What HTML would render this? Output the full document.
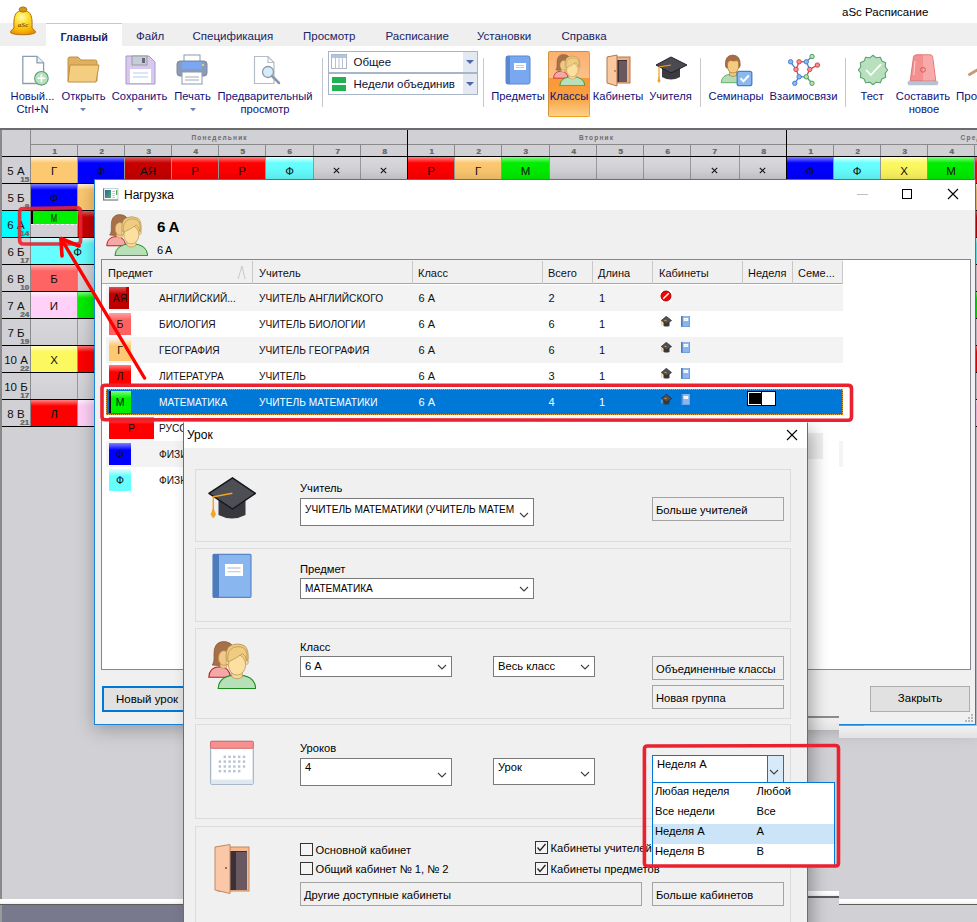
<!DOCTYPE html><html><head><meta charset="utf-8"><style>
html,body{margin:0;padding:0;}
body{width:977px;height:922px;overflow:hidden;position:relative;background:#fff;font-family:"Liberation Sans", sans-serif;}
div{box-sizing:border-box;}
</style></head><body>
<div style="position:absolute;left:842px;top:7px;font-size:11.5px;line-height:11.5px;height:11.5px;color:#000;font-weight:400;white-space:nowrap;">aSc Расписание</div>
<div style="position:absolute;left:0px;top:23px;width:977px;height:23px;background:#efefef;"></div>
<div style="position:absolute;left:46px;top:23px;width:76px;height:23px;background:#fff;border-top:1px solid #c8c8c8;"></div>
<svg style="position:absolute;left:0px;top:0px" width="40" height="40" viewBox="0 0 40 40">
<defs><radialGradient id="bellg" cx="0.45" cy="0.3" r="0.75"><stop offset="0" stop-color="#fffbb0"/><stop offset="0.35" stop-color="#ffe030"/><stop offset="0.75" stop-color="#f8b400"/><stop offset="1" stop-color="#e88a00"/></radialGradient></defs>
<path d="M14 28 C13.5 18 14 11 23 10 C32 11 32.5 18 32 28 C34 30 36 31 35.5 32.5 C33 35.5 13 35.5 10.5 32.5 C10 31 12 30 14 28 Z" fill="url(#bellg)" stroke="#a86a10" stroke-width="0.9"/>
<ellipse cx="23" cy="9.5" rx="3.8" ry="2.6" fill="#d89418" stroke="#98600c" stroke-width="0.8"/>
<text x="23" y="27" font-size="7" text-anchor="middle" fill="#8a4a10" font-family="Liberation Serif" font-style="italic" font-weight="bold">aSc</text>
</svg>
<div style="position:absolute;left:60.5px;top:32px;font-size:10.8px;line-height:10.8px;height:10.8px;color:#1a2464;font-weight:700;white-space:nowrap;">Главный</div>
<div style="position:absolute;left:136px;top:31px;font-size:11.5px;line-height:11.5px;height:11.5px;color:#1a2464;font-weight:400;white-space:nowrap;">Файл</div>
<div style="position:absolute;left:192.5px;top:31px;font-size:11.5px;line-height:11.5px;height:11.5px;color:#1a2464;font-weight:400;white-space:nowrap;">Спецификация</div>
<div style="position:absolute;left:303px;top:31px;font-size:11.5px;line-height:11.5px;height:11.5px;color:#1a2464;font-weight:400;white-space:nowrap;">Просмотр</div>
<div style="position:absolute;left:385.5px;top:31px;font-size:11.5px;line-height:11.5px;height:11.5px;color:#1a2464;font-weight:400;white-space:nowrap;">Расписание</div>
<div style="position:absolute;left:477px;top:31px;font-size:11.5px;line-height:11.5px;height:11.5px;color:#1a2464;font-weight:400;white-space:nowrap;">Установки</div>
<div style="position:absolute;left:561.5px;top:31px;font-size:11.5px;line-height:11.5px;height:11.5px;color:#1a2464;font-weight:400;white-space:nowrap;">Справка</div>
<div style="position:absolute;left:548px;top:51px;width:42px;height:66px;border:1px solid #f0a848;border-radius:2px;background:linear-gradient(to bottom,#fbb070 0%,#fcc088 40%,#f99838 41%,#f9a040 70%,#fcd088 100%);border-color:#c89048 #f0a020 #f0a020 #d09040;"></div>
<div style="position:absolute;left:-27.5px;width:120px;text-align:center;top:90px;font-size:11.2px;line-height:12px;color:#10107a;white-space:nowrap;">Новый...</div>
<div style="position:absolute;left:-27.5px;width:120px;text-align:center;top:102.5px;font-size:11.2px;line-height:12px;color:#10107a;white-space:nowrap;">Ctrl+N</div>
<div style="position:absolute;left:23.5px;width:120px;text-align:center;top:90px;font-size:11.2px;line-height:12px;color:#10107a;white-space:nowrap;">Открыть</div>
<div style="position:absolute;left:79.5px;width:120px;text-align:center;top:90px;font-size:11.2px;line-height:12px;color:#10107a;white-space:nowrap;">Сохранить</div>
<div style="position:absolute;left:132.5px;width:120px;text-align:center;top:90px;font-size:11.2px;line-height:12px;color:#10107a;white-space:nowrap;">Печать</div>
<div style="position:absolute;left:205px;width:120px;text-align:center;top:90px;font-size:11.2px;line-height:12px;color:#10107a;white-space:nowrap;">Предварительный</div>
<div style="position:absolute;left:205px;width:120px;text-align:center;top:102.5px;font-size:11.2px;line-height:12px;color:#10107a;white-space:nowrap;">просмотр</div>
<div style="position:absolute;left:458px;width:120px;text-align:center;top:90px;font-size:11.2px;line-height:12px;color:#10107a;white-space:nowrap;">Предметы</div>
<div style="position:absolute;left:509px;width:120px;text-align:center;top:90px;font-size:11.2px;line-height:12px;color:#10107a;white-space:nowrap;">Классы</div>
<div style="position:absolute;left:558px;width:120px;text-align:center;top:90px;font-size:11.2px;line-height:12px;color:#10107a;white-space:nowrap;">Кабинеты</div>
<div style="position:absolute;left:610.5px;width:120px;text-align:center;top:90px;font-size:11.2px;line-height:12px;color:#10107a;white-space:nowrap;">Учителя</div>
<div style="position:absolute;left:676px;width:120px;text-align:center;top:90px;font-size:11.2px;line-height:12px;color:#10107a;white-space:nowrap;">Семинары</div>
<div style="position:absolute;left:743.5px;width:120px;text-align:center;top:90px;font-size:11.2px;line-height:12px;color:#10107a;white-space:nowrap;">Взаимосвязи</div>
<div style="position:absolute;left:812px;width:120px;text-align:center;top:90px;font-size:11.2px;line-height:12px;color:#10107a;white-space:nowrap;">Тест</div>
<div style="position:absolute;left:863px;width:120px;text-align:center;top:90px;font-size:11.2px;line-height:12px;color:#10107a;white-space:nowrap;">Составить</div>
<div style="position:absolute;left:864px;width:120px;text-align:center;top:103px;font-size:11.2px;line-height:12px;color:#10107a;white-space:nowrap;">новое</div>
<div style="position:absolute;left:956px;top:90px;font-size:11.5px;line-height:12px;color:#10107a;white-space:nowrap;">Про</div>
<svg style="position:absolute;left:79.5px;top:107.5px" width="6" height="4"><path d="M0 0 L6 0 L3 3.2Z" fill="#6a7eb0"/></svg>
<svg style="position:absolute;left:136.5px;top:107.5px" width="6" height="4"><path d="M0 0 L6 0 L3 3.2Z" fill="#6a7eb0"/></svg>
<svg style="position:absolute;left:189.5px;top:107.5px" width="6" height="4"><path d="M0 0 L6 0 L3 3.2Z" fill="#6a7eb0"/></svg>
<div style="position:absolute;left:321.5px;top:58px;width:1px;height:49px;background:#c8c8c8;"></div>
<div style="position:absolute;left:482.5px;top:58px;width:1px;height:49px;background:#c8c8c8;"></div>
<div style="position:absolute;left:699.5px;top:58px;width:1px;height:49px;background:#c8c8c8;"></div>
<div style="position:absolute;left:845px;top:58px;width:1px;height:49px;background:#c8c8c8;"></div>
<div style="position:absolute;left:328px;top:51px;width:150px;height:22px;border:1px solid #a8b4c8;background:#fff;"></div>
<div style="position:absolute;left:463px;top:52px;width:14px;height:20px;background:#e4e8f0;"></div>
<svg style="position:absolute;left:466px;top:60px" width="8" height="4"><path d="M0 0 L8 0 L4 4Z" fill="#4a6aa8"/></svg>
<div style="position:absolute;left:353.5px;top:57px;font-size:11.5px;line-height:11.5px;height:11.5px;color:#101030;font-weight:400;white-space:nowrap;">Общее</div>
<div style="position:absolute;left:328px;top:73px;width:150px;height:22px;border:1px solid #a8b4c8;background:#fff;"></div>
<div style="position:absolute;left:463px;top:74px;width:14px;height:20px;background:#e4e8f0;"></div>
<svg style="position:absolute;left:466px;top:82px" width="8" height="4"><path d="M0 0 L8 0 L4 4Z" fill="#4a6aa8"/></svg>
<div style="position:absolute;left:353.5px;top:79px;font-size:11.5px;line-height:11.5px;height:11.5px;color:#101030;font-weight:400;white-space:nowrap;">Недели объединив</div>
<svg style="position:absolute;left:331px;top:54px" width="16" height="16" viewBox="0 0 16 16">
<rect x="0.5" y="0.5" width="15" height="14" fill="#fff" stroke="#b0b8c8"/><rect x="1" y="1" width="14" height="3" fill="#a8c8f0"/>
<path d="M4.5 1 V15 M8 1 V15 M11.5 1 V15" stroke="#b8c0d0" stroke-width="1"/></svg>
<svg style="position:absolute;left:332px;top:77px" width="15" height="15" viewBox="0 0 15 15">
<rect x="0" y="0" width="14" height="6" fill="#1fb350"/><rect x="0" y="8" width="14" height="6" fill="#1fb350"/></svg>

<svg style="position:absolute;left:21px;top:55px" width="30" height="32" viewBox="0 0 30 32">
<path d="M1.8 1.3 H16 L22.6 7.8 V28.5 H1.8 Z" fill="#fff" stroke="#8c9db0" stroke-width="1.3"/>
<path d="M16 1.3 V7.8 H22.6" fill="#e8eef4" stroke="#8c9db0" stroke-width="1.3"/>
<circle cx="20.4" cy="23.3" r="6.8" fill="#b8e0c0" stroke="#5aa070" stroke-width="1.1"/>
<path d="M20.4 19.4 V27.2 M16.5 23.3 H24.3" stroke="#fff" stroke-width="1.6"/>
</svg>
<svg style="position:absolute;left:67px;top:56px" width="33" height="28" viewBox="0 0 33 28">
<path d="M1 3 Q1 1 3 1 H11 L14 4 H28 Q30 4 30 6 V25 H1 Z" fill="#e0b060" stroke="#c09040" stroke-width="1"/>
<path d="M3 9 H32 L29 26 H1 Z" fill="#f5cd80" stroke="#c09040" stroke-width="1"/>
</svg>
<svg style="position:absolute;left:125px;top:55px" width="31" height="30" viewBox="0 0 31 30">
<path d="M1 1 H24 L30 7 V29 H1 Z" fill="#d8c8f0" stroke="#a898c8" stroke-width="1"/>
<rect x="7" y="1" width="15" height="9" fill="#c8ccd8" stroke="#909090" stroke-width="0.8"/>
<rect x="17" y="3" width="3" height="5" fill="#606878"/>
<rect x="5" y="14" width="21" height="14" fill="#fff"/>
<path d="M8 18 H23 M8 22 H23" stroke="#b0d0f0" stroke-width="1"/>
</svg>
<svg style="position:absolute;left:176px;top:54px" width="32" height="31" viewBox="0 0 32 31">
<rect x="8" y="1" width="16" height="8" fill="#fff" stroke="#8a9aac" stroke-width="1"/>
<rect x="1" y="7" width="30" height="15" rx="3" fill="#8a9ab8" stroke="#7a8aa0" stroke-width="1"/>
<rect x="6" y="8" width="20" height="7" fill="#7aa8f0"/>
<circle cx="27" cy="11" r="1" fill="#f8e070"/>
<rect x="6" y="18" width="20" height="12" fill="#fff" stroke="#8a9aac" stroke-width="1"/>
<path d="M9 23 H23 M9 26 H23" stroke="#a0a8b8" stroke-width="1"/>
</svg>
<svg style="position:absolute;left:253px;top:55px" width="29" height="30" viewBox="0 0 29 30">
<path d="M1.5 1.5 H15 L21 7.5 V28.5 H1.5 Z" fill="#fff" stroke="#b4bcc8" stroke-width="1.2"/>
<path d="M15 1.5 V7.5 H21" fill="none" stroke="#b4bcc8" stroke-width="1.2"/>
<circle cx="15" cy="17" r="5.5" fill="#d4ecfc" stroke="#8a98a8" stroke-width="1.3"/>
<path d="M19 21 L26 28" stroke="#8a98a8" stroke-width="2.5" stroke-linecap="round"/>
</svg>
<svg style="position:absolute;left:505px;top:55px" width="26" height="30" viewBox="0 0 26 30">
<rect x="1" y="1" width="24" height="28" rx="2" fill="#7aa8f0" stroke="#5a88d0" stroke-width="1"/>
<rect x="1" y="1" width="4" height="28" fill="#5a88d0"/>
<rect x="9" y="8" width="12" height="7" fill="#fff"/>
<path d="M11 10.5 H19 M11 12.5 H19" stroke="#a8c0e8" stroke-width="0.8"/>
</svg>
<svg style="position:absolute;left:553px;top:54px" width="32" height="32" viewBox="0 0 48 48">
<path d="M0.8 36.3 Q1.5 26 11.5 25.8 Q21.5 26 22.5 36.3 Z" fill="#f5a8a8" stroke="#c01818" stroke-width="1.1"/>
<path d="M4.2 24 Q6.5 21.5 6 14 Q5.5 1 15.3 0.6 Q21.5 0.6 24.5 4.8 L24 21 Q19 25 10 24.5 Z" fill="#a87048" stroke="#8a5836" stroke-width="0.8"/>
<ellipse cx="15.5" cy="24.5" rx="3.5" ry="3" fill="#f0c888" stroke="#b89058" stroke-width="0.7"/>
<ellipse cx="15.8" cy="17" rx="5.3" ry="7.3" fill="#f0c888" stroke="#b89058" stroke-width="0.8"/>
<path d="M10.2 47.6 Q11 34.2 29 34 Q47 34.2 47.7 47.6 Z" fill="#b8e0b8" stroke="#1a8a1a" stroke-width="1.1"/>
<path d="M23.8 29 V36 Q29 39.5 34.2 36 V29 Z" fill="#fcd898" stroke="#b89858" stroke-width="0.8"/>
<path d="M18.6 22 Q16.5 7 23 4.5 Q29.5 1.5 36.5 4.8 Q41.5 8.5 39.8 22 Z" fill="#f0cc80" stroke="#b08e50" stroke-width="0.8"/>
<ellipse cx="19.3" cy="21.6" rx="1.3" ry="2" fill="#fde0a0" stroke="#b89858" stroke-width="0.6"/>
<ellipse cx="38.8" cy="21.6" rx="1.3" ry="2" fill="#fde0a0" stroke="#b89858" stroke-width="0.6"/>
<ellipse cx="29" cy="23.8" rx="8.6" ry="10.3" fill="#fde0a0" stroke="#b89858" stroke-width="0.8"/>
<path d="M20 21 Q18.5 9 25.5 6.5 Q33 4 37.5 8.5 Q40 13 38.8 19.5 Q37.5 14 34.5 12.5 Q29 17 20 21 Z" fill="#f0cc80" stroke="#b08e50" stroke-width="0.7"/>
</svg>
<svg style="position:absolute;left:606px;top:54px" width="26" height="33" viewBox="0 0 26 33">
<rect x="3" y="3" width="21" height="26" fill="#f0b080" stroke="#b07850" stroke-width="1"/>
<rect x="8" y="6" width="13" height="22" fill="#3a3038"/>
<rect x="13" y="7" width="8" height="21" fill="#6a5860"/>
<path d="M1 3 L11 1 V32 L1 29 Z" fill="#fac8a0" stroke="#b07850" stroke-width="1"/>
<circle cx="9" cy="17" r="0.8" fill="#804020"/>
</svg>
<svg style="position:absolute;left:655px;top:56px" width="33" height="28" viewBox="0 0 33 28">
<path d="M7 11 V21 Q16 26 25 21 V11 Z" fill="#3a3a40"/>
<path d="M16 1 L32 9 L16 17 L1 9 Z" fill="#4a4a50" stroke="#202028" stroke-width="1"/>
<path d="M16 9 L4 11 V22" stroke="#f0a020" stroke-width="1.2" fill="none"/>
<path d="M4 20 L2.5 25 L4 27 L5.5 25 Z" fill="#f0a020"/>
</svg>
<svg style="position:absolute;left:720px;top:54px" width="34" height="33" viewBox="0 0 34 33">
<path d="M1.2 28.7 Q1.8 20.3 11.5 20.2 Q18 20.3 20 22 V28.7 Z" fill="#b4dcb4" stroke="#5aa86a" stroke-width="0.9"/>
<path d="M9.5 17 V21.5 Q13 23.5 16.5 21.5 V17 Z" fill="#f0c880" stroke="#a87838" stroke-width="0.7"/>
<path d="M5.5 12 Q4.5 1.5 12.5 1.1 Q20.5 1 20.2 11.5 L19 14 H6.5 Z" fill="#a86c44" stroke="#8a5434" stroke-width="0.7"/>
<path d="M7.4 11 Q7.4 6.8 10.5 6.5 Q14 7.5 17.5 6.6 Q18.8 8 18.7 11 Q18.7 19 13 19 Q7.4 19 7.4 11 Z" fill="#f4cc80" stroke="#a87838" stroke-width="0.7"/>
<rect x="17.2" y="17.3" width="14.6" height="14.4" rx="2" fill="#8ab8f0" stroke="#4a7ec0" stroke-width="1.3"/>
<path d="M20.5 24.3 L23.5 27.3 L28.8 21.5" stroke="#fff" stroke-width="2" fill="none"/>
</svg>
<svg style="position:absolute;left:782px;top:50px" width="40" height="40" viewBox="0 0 40 40"><line x1="8.6" y1="11.8" x2="14.0" y2="19.4" stroke="#4a80d0" stroke-width="1.3"/><line x1="17.1" y1="11.8" x2="14.0" y2="19.4" stroke="#d04848" stroke-width="1.3"/><line x1="17.1" y1="11.8" x2="24.3" y2="11.8" stroke="#d04848" stroke-width="1.3"/><line x1="24.3" y1="11.8" x2="30.0" y2="6.5" stroke="#4a80d0" stroke-width="1.3"/><line x1="24.3" y1="11.8" x2="27.7" y2="19.4" stroke="#4a80d0" stroke-width="1.3"/><line x1="27.7" y1="19.4" x2="35.4" y2="15.1" stroke="#d04848" stroke-width="1.3"/><line x1="27.7" y1="19.4" x2="24.3" y2="26.8" stroke="#d04848" stroke-width="1.3"/><line x1="14.0" y1="19.4" x2="17.1" y2="26.8" stroke="#d04848" stroke-width="1.3"/><line x1="17.1" y1="26.8" x2="24.3" y2="26.8" stroke="#4a80d0" stroke-width="1.3"/><line x1="17.1" y1="26.8" x2="12.8" y2="33.3" stroke="#4a80d0" stroke-width="1.3"/><line x1="24.3" y1="26.8" x2="30.0" y2="33.3" stroke="#50a060" stroke-width="1.3"/><circle cx="8.6" cy="11.8" r="2.2" fill="#8ab8f8" stroke="#4a80d0" stroke-width="1"/><circle cx="17.1" cy="11.8" r="2.2" fill="#f89090" stroke="#d04848" stroke-width="1"/><circle cx="24.3" cy="11.8" r="2.2" fill="#8ab8f8" stroke="#4a80d0" stroke-width="1"/><circle cx="30.0" cy="6.5" r="2.2" fill="#b8e0b8" stroke="#50a060" stroke-width="1"/><circle cx="14.0" cy="19.4" r="2.2" fill="#f89090" stroke="#d04848" stroke-width="1"/><circle cx="27.7" cy="19.4" r="2.2" fill="#f89090" stroke="#d04848" stroke-width="1"/><circle cx="35.4" cy="15.1" r="2.2" fill="#f89090" stroke="#d04848" stroke-width="1"/><circle cx="17.1" cy="26.8" r="2.2" fill="#8ab8f8" stroke="#4a80d0" stroke-width="1"/><circle cx="24.3" cy="26.8" r="2.2" fill="#b8e0b8" stroke="#50a060" stroke-width="1"/><circle cx="12.8" cy="33.3" r="2.2" fill="#8ab8f8" stroke="#4a80d0" stroke-width="1"/><circle cx="30.0" cy="33.3" r="2.2" fill="#b8e0b8" stroke="#50a060" stroke-width="1"/></svg>
<svg style="position:absolute;left:853px;top:50px" width="40" height="40" viewBox="0 0 40 40">
<polygon points="20.00,5.30 23.26,7.83 27.35,7.27 28.91,11.09 32.73,12.65 32.17,16.74 34.70,20.00 32.17,23.26 32.73,27.35 28.91,28.91 27.35,32.73 23.26,32.17 20.00,34.70 16.74,32.17 12.65,32.73 11.09,28.91 7.27,27.35 7.83,23.26 5.30,20.00 7.83,16.74 7.27,12.65 11.09,11.09 12.65,7.27 16.74,7.83" fill="#b8e0bc" stroke="#5aa070" stroke-width="1.1" stroke-linejoin="round"/>
<path d="M13.6 20.5 L17.8 25 L27.6 14.6" stroke="#fff" stroke-width="1.8" fill="none" stroke-linecap="round"/>
</svg>
<svg style="position:absolute;left:900px;top:45px" width="77" height="45" viewBox="0 0 77 45">
<path d="M10.2 36 L13.5 12 Q14 9.8 16.5 9.8 H30 Q32.3 9.8 32.7 12 L35.8 36 Z" fill="#f59090" stroke="#e06a6a" stroke-width="0.9"/>
<path d="M23 10.3 H30 Q32 10.3 32.3 12 L35.3 35.5 H23 Z" fill="#f8aaaa"/>
<path d="M15 16 L13.8 30" stroke="#fff" stroke-width="0.7" opacity="0.9"/>
<circle cx="23" cy="24.8" r="2.4" fill="none" stroke="#d85858" stroke-width="1"/>
<rect x="8.1" y="36.2" width="29.7" height="3.6" rx="1" fill="#b4c4d4" stroke="#a0b0c0" stroke-width="0.6"/>
<path d="M69.5 29.5 L78 24.5" stroke="#c89870" stroke-width="2.8" stroke-linecap="round"/>
</svg>

<div style="position:absolute;left:0px;top:128px;width:977px;height:2px;background:#6c6c6c;"></div>
<div style="position:absolute;left:0px;top:130px;width:977px;height:769px;background:#d1d0d5;"></div>
<div style="position:absolute;left:0px;top:130px;width:2px;height:769px;background:#8a8a8a;"></div>
<div style="position:absolute;left:0px;top:899px;width:977px;height:5px;background:linear-gradient(to bottom,#ffffff 0%,#fbfbfb 60%,#eeeeee 100%);"></div>
<div style="position:absolute;left:0px;top:904px;width:977px;height:1px;background:#5c5c5c;"></div>
<div style="position:absolute;left:0px;top:905px;width:977px;height:17px;background:#d1d0d5;"></div>
<div style="position:absolute;left:0px;top:905px;width:190px;height:17px;background:#79798e;"></div>
<div style="position:absolute;left:0px;top:905px;width:2px;height:17px;background:#9a9a9a;"></div>
<div style="position:absolute;left:808px;top:891px;width:31px;height:5px;background:linear-gradient(to bottom,#ffffff 0%,#fbfbfb 60%,#eeeeee 100%);"></div>
<div style="position:absolute;left:808px;top:896px;width:31px;height:2px;background:#5c5c5c;"></div>
<div style="position:absolute;left:808px;top:898px;width:31px;height:7px;background:#d1d0d5;"></div>
<div style="position:absolute;left:30px;top:130px;width:1px;height:296px;background:#8a8a8a;"></div>
<div style="position:absolute;left:31px;top:144px;width:946px;height:1px;background:#8a8a8a;"></div>
<div style="position:absolute;left:2px;top:156px;width:975px;height:1px;background:#000;"></div>
<div style="position:absolute;left:159.6px;width:120px;top:134.8px;text-align:center;font-size:6.5px;line-height:6.5px;font-weight:700;color:#6c6c6c;letter-spacing:1.2px;">Понедельник</div>
<div style="position:absolute;left:536.6px;width:120px;top:134.8px;text-align:center;font-size:6.5px;line-height:6.5px;font-weight:700;color:#6c6c6c;letter-spacing:1.2px;">Вторник</div>
<div style="position:absolute;left:913.6px;width:120px;top:134.8px;text-align:center;font-size:6.5px;line-height:6.5px;font-weight:700;color:#6c6c6c;letter-spacing:1.2px;">Среда</div>
<div style="position:absolute;left:31px;width:47px;top:147px;text-align:center;font-size:8px;line-height:9px;font-weight:700;color:#6c6c6c;text-shadow:0.4px 0 0 #6c6c6c;">1</div>
<div style="position:absolute;left:78px;width:47px;top:147px;text-align:center;font-size:8px;line-height:9px;font-weight:700;color:#6c6c6c;text-shadow:0.4px 0 0 #6c6c6c;">2</div>
<div style="position:absolute;left:77px;top:144px;width:1px;height:12px;background:#8a8a8a;"></div>
<div style="position:absolute;left:125px;width:47px;top:147px;text-align:center;font-size:8px;line-height:9px;font-weight:700;color:#6c6c6c;text-shadow:0.4px 0 0 #6c6c6c;">3</div>
<div style="position:absolute;left:124px;top:144px;width:1px;height:12px;background:#8a8a8a;"></div>
<div style="position:absolute;left:172px;width:47px;top:147px;text-align:center;font-size:8px;line-height:9px;font-weight:700;color:#6c6c6c;text-shadow:0.4px 0 0 #6c6c6c;">4</div>
<div style="position:absolute;left:171px;top:144px;width:1px;height:12px;background:#8a8a8a;"></div>
<div style="position:absolute;left:219px;width:47px;top:147px;text-align:center;font-size:8px;line-height:9px;font-weight:700;color:#6c6c6c;text-shadow:0.4px 0 0 #6c6c6c;">5</div>
<div style="position:absolute;left:218px;top:144px;width:1px;height:12px;background:#8a8a8a;"></div>
<div style="position:absolute;left:266px;width:47px;top:147px;text-align:center;font-size:8px;line-height:9px;font-weight:700;color:#6c6c6c;text-shadow:0.4px 0 0 #6c6c6c;">6</div>
<div style="position:absolute;left:265px;top:144px;width:1px;height:12px;background:#8a8a8a;"></div>
<div style="position:absolute;left:314px;width:47px;top:147px;text-align:center;font-size:8px;line-height:9px;font-weight:700;color:#6c6c6c;text-shadow:0.4px 0 0 #6c6c6c;">7</div>
<div style="position:absolute;left:313px;top:144px;width:1px;height:12px;background:#8a8a8a;"></div>
<div style="position:absolute;left:361px;width:47px;top:147px;text-align:center;font-size:8px;line-height:9px;font-weight:700;color:#6c6c6c;text-shadow:0.4px 0 0 #6c6c6c;">8</div>
<div style="position:absolute;left:360px;top:144px;width:1px;height:12px;background:#8a8a8a;"></div>
<div style="position:absolute;left:408px;width:47px;top:147px;text-align:center;font-size:8px;line-height:9px;font-weight:700;color:#6c6c6c;text-shadow:0.4px 0 0 #6c6c6c;">1</div>
<div style="position:absolute;left:455px;width:47px;top:147px;text-align:center;font-size:8px;line-height:9px;font-weight:700;color:#6c6c6c;text-shadow:0.4px 0 0 #6c6c6c;">2</div>
<div style="position:absolute;left:454px;top:144px;width:1px;height:12px;background:#8a8a8a;"></div>
<div style="position:absolute;left:502px;width:47px;top:147px;text-align:center;font-size:8px;line-height:9px;font-weight:700;color:#6c6c6c;text-shadow:0.4px 0 0 #6c6c6c;">3</div>
<div style="position:absolute;left:501px;top:144px;width:1px;height:12px;background:#8a8a8a;"></div>
<div style="position:absolute;left:550px;width:47px;top:147px;text-align:center;font-size:8px;line-height:9px;font-weight:700;color:#6c6c6c;text-shadow:0.4px 0 0 #6c6c6c;">4</div>
<div style="position:absolute;left:549px;top:144px;width:1px;height:12px;background:#8a8a8a;"></div>
<div style="position:absolute;left:597px;width:47px;top:147px;text-align:center;font-size:8px;line-height:9px;font-weight:700;color:#6c6c6c;text-shadow:0.4px 0 0 #6c6c6c;">5</div>
<div style="position:absolute;left:596px;top:144px;width:1px;height:12px;background:#8a8a8a;"></div>
<div style="position:absolute;left:644px;width:47px;top:147px;text-align:center;font-size:8px;line-height:9px;font-weight:700;color:#6c6c6c;text-shadow:0.4px 0 0 #6c6c6c;">6</div>
<div style="position:absolute;left:643px;top:144px;width:1px;height:12px;background:#8a8a8a;"></div>
<div style="position:absolute;left:691px;width:47px;top:147px;text-align:center;font-size:8px;line-height:9px;font-weight:700;color:#6c6c6c;text-shadow:0.4px 0 0 #6c6c6c;">7</div>
<div style="position:absolute;left:690px;top:144px;width:1px;height:12px;background:#8a8a8a;"></div>
<div style="position:absolute;left:740px;width:47px;top:147px;text-align:center;font-size:8px;line-height:9px;font-weight:700;color:#6c6c6c;text-shadow:0.4px 0 0 #6c6c6c;">8</div>
<div style="position:absolute;left:739px;top:144px;width:1px;height:12px;background:#8a8a8a;"></div>
<div style="position:absolute;left:787px;width:47px;top:147px;text-align:center;font-size:8px;line-height:9px;font-weight:700;color:#6c6c6c;text-shadow:0.4px 0 0 #6c6c6c;">1</div>
<div style="position:absolute;left:834px;width:47px;top:147px;text-align:center;font-size:8px;line-height:9px;font-weight:700;color:#6c6c6c;text-shadow:0.4px 0 0 #6c6c6c;">2</div>
<div style="position:absolute;left:833px;top:144px;width:1px;height:12px;background:#8a8a8a;"></div>
<div style="position:absolute;left:881px;width:47px;top:147px;text-align:center;font-size:8px;line-height:9px;font-weight:700;color:#6c6c6c;text-shadow:0.4px 0 0 #6c6c6c;">3</div>
<div style="position:absolute;left:880px;top:144px;width:1px;height:12px;background:#8a8a8a;"></div>
<div style="position:absolute;left:928px;width:47px;top:147px;text-align:center;font-size:8px;line-height:9px;font-weight:700;color:#6c6c6c;text-shadow:0.4px 0 0 #6c6c6c;">4</div>
<div style="position:absolute;left:927px;top:144px;width:1px;height:12px;background:#8a8a8a;"></div>
<div style="position:absolute;left:975px;width:47px;top:147px;text-align:center;font-size:8px;line-height:9px;font-weight:700;color:#6c6c6c;text-shadow:0.4px 0 0 #6c6c6c;">5</div>
<div style="position:absolute;left:974px;top:144px;width:1px;height:12px;background:#8a8a8a;"></div>
<div style="position:absolute;left:407px;top:130px;width:1px;height:296px;background:#000;"></div>
<div style="position:absolute;left:786px;top:130px;width:1px;height:296px;background:#000;"></div>
<div style="position:absolute;left:2px;top:157px;width:28px;height:26px;background:#d1d0d5;"></div>
<div style="position:absolute;left:2px;width:28px;top:165px;text-align:center;font-size:11.5px;line-height:12px;color:#101010;">5 А</div>
<div style="position:absolute;left:2px;width:27px;top:176px;text-align:right;font-size:8px;line-height:8px;font-weight:700;color:#6e6e6e;text-shadow:0.4px 0 0 #6e6e6e;">15</div>
<div style="position:absolute;left:2px;top:183px;width:975px;height:1px;background:#000;"></div>
<div style="position:absolute;left:2px;top:184px;width:28px;height:26px;background:#d1d0d5;"></div>
<div style="position:absolute;left:2px;width:28px;top:192px;text-align:center;font-size:11.5px;line-height:12px;color:#101010;">5 Б</div>
<div style="position:absolute;left:2px;width:27px;top:203px;text-align:right;font-size:8px;line-height:8px;font-weight:700;color:#6e6e6e;text-shadow:0.4px 0 0 #6e6e6e;">8</div>
<div style="position:absolute;left:2px;top:210px;width:975px;height:1px;background:#000;"></div>
<div style="position:absolute;left:2px;top:211px;width:28px;height:26px;background:#00ffff;"></div>
<div style="position:absolute;left:2px;width:28px;top:219px;text-align:center;font-size:11.5px;line-height:12px;color:#101010;">6 А</div>
<div style="position:absolute;left:2px;width:27px;top:230px;text-align:right;font-size:8px;line-height:8px;font-weight:700;color:#6e6e6e;text-shadow:0.4px 0 0 #6e6e6e;">14</div>
<div style="position:absolute;left:2px;top:237px;width:975px;height:1px;background:#000;"></div>
<div style="position:absolute;left:2px;top:238px;width:28px;height:26px;background:#d1d0d5;"></div>
<div style="position:absolute;left:2px;width:28px;top:246px;text-align:center;font-size:11.5px;line-height:12px;color:#101010;">6 Б</div>
<div style="position:absolute;left:2px;width:27px;top:257px;text-align:right;font-size:8px;line-height:8px;font-weight:700;color:#6e6e6e;text-shadow:0.4px 0 0 #6e6e6e;">17</div>
<div style="position:absolute;left:2px;top:264px;width:975px;height:1px;background:#000;"></div>
<div style="position:absolute;left:2px;top:265px;width:28px;height:26px;background:#d1d0d5;"></div>
<div style="position:absolute;left:2px;width:28px;top:273px;text-align:center;font-size:11.5px;line-height:12px;color:#101010;">6 В</div>
<div style="position:absolute;left:2px;width:27px;top:284px;text-align:right;font-size:8px;line-height:8px;font-weight:700;color:#6e6e6e;text-shadow:0.4px 0 0 #6e6e6e;">10</div>
<div style="position:absolute;left:2px;top:291px;width:975px;height:1px;background:#000;"></div>
<div style="position:absolute;left:2px;top:292px;width:28px;height:26px;background:#d1d0d5;"></div>
<div style="position:absolute;left:2px;width:28px;top:300px;text-align:center;font-size:11.5px;line-height:12px;color:#101010;">7 А</div>
<div style="position:absolute;left:2px;width:27px;top:311px;text-align:right;font-size:8px;line-height:8px;font-weight:700;color:#6e6e6e;text-shadow:0.4px 0 0 #6e6e6e;">24</div>
<div style="position:absolute;left:2px;top:318px;width:975px;height:1px;background:#000;"></div>
<div style="position:absolute;left:2px;top:319px;width:28px;height:26px;background:#d1d0d5;"></div>
<div style="position:absolute;left:2px;width:28px;top:327px;text-align:center;font-size:11.5px;line-height:12px;color:#101010;">7 Б</div>
<div style="position:absolute;left:2px;width:27px;top:338px;text-align:right;font-size:8px;line-height:8px;font-weight:700;color:#6e6e6e;text-shadow:0.4px 0 0 #6e6e6e;">19</div>
<div style="position:absolute;left:2px;top:345px;width:975px;height:1px;background:#000;"></div>
<div style="position:absolute;left:2px;top:346px;width:28px;height:26px;background:#d1d0d5;"></div>
<div style="position:absolute;left:2px;width:28px;top:354px;text-align:center;font-size:11.5px;line-height:12px;color:#101010;">10 А</div>
<div style="position:absolute;left:2px;width:27px;top:365px;text-align:right;font-size:8px;line-height:8px;font-weight:700;color:#6e6e6e;text-shadow:0.4px 0 0 #6e6e6e;">22</div>
<div style="position:absolute;left:2px;top:372px;width:975px;height:1px;background:#000;"></div>
<div style="position:absolute;left:2px;top:373px;width:28px;height:26px;background:#d1d0d5;"></div>
<div style="position:absolute;left:2px;width:28px;top:381px;text-align:center;font-size:11.5px;line-height:12px;color:#101010;">10 Б</div>
<div style="position:absolute;left:2px;width:27px;top:392px;text-align:right;font-size:8px;line-height:8px;font-weight:700;color:#6e6e6e;text-shadow:0.4px 0 0 #6e6e6e;">17</div>
<div style="position:absolute;left:2px;top:399px;width:975px;height:1px;background:#000;"></div>
<div style="position:absolute;left:2px;top:400px;width:28px;height:26px;background:#d1d0d5;"></div>
<div style="position:absolute;left:2px;width:28px;top:408px;text-align:center;font-size:11.5px;line-height:12px;color:#101010;">8 В</div>
<div style="position:absolute;left:2px;width:27px;top:419px;text-align:right;font-size:8px;line-height:8px;font-weight:700;color:#6e6e6e;text-shadow:0.4px 0 0 #6e6e6e;">21</div>
<div style="position:absolute;left:2px;top:426px;width:975px;height:1px;background:#000;"></div>
<div style="position:absolute;left:31px;top:157px;width:46px;height:26px;background:linear-gradient(to bottom,#fff0d8 0px,#fcc870 6px,#fcc870 100%);"></div>
<div style="position:absolute;left:31px;width:46px;top:165px;text-align:center;font-size:11.5px;line-height:12px;color:#101010;">Г</div>
<div style="position:absolute;left:77px;top:157px;width:1px;height:26px;background:#9a9a9a;"></div>
<div style="position:absolute;left:78px;top:157px;width:46px;height:26px;background:linear-gradient(to bottom,#8080ff 0px,#0000ff 6px,#0000ff 100%);"></div>
<div style="position:absolute;left:78px;width:46px;top:165px;text-align:center;font-size:11.5px;line-height:12px;color:#101010;">Ф</div>
<div style="position:absolute;left:124px;top:157px;width:1px;height:26px;background:#9a9a9a;"></div>
<div style="position:absolute;left:125px;top:157px;width:46px;height:26px;background:linear-gradient(to bottom,#e06060 0px,#c80000 6px,#c80000 100%);"></div>
<div style="position:absolute;left:125px;width:46px;top:165px;text-align:center;font-size:11.5px;line-height:12px;color:#101010;">АЯ</div>
<div style="position:absolute;left:171px;top:157px;width:1px;height:26px;background:#9a9a9a;"></div>
<div style="position:absolute;left:172px;top:157px;width:46px;height:26px;background:linear-gradient(to bottom,#ff8080 0px,#ff0000 6px,#ff0000 100%);"></div>
<div style="position:absolute;left:172px;width:46px;top:165px;text-align:center;font-size:11.5px;line-height:12px;color:#101010;">Р</div>
<div style="position:absolute;left:218px;top:157px;width:1px;height:26px;background:#9a9a9a;"></div>
<div style="position:absolute;left:219px;top:157px;width:46px;height:26px;background:linear-gradient(to bottom,#ff8080 0px,#ff0000 6px,#ff0000 100%);"></div>
<div style="position:absolute;left:219px;width:46px;top:165px;text-align:center;font-size:11.5px;line-height:12px;color:#101010;">Р</div>
<div style="position:absolute;left:265px;top:157px;width:1px;height:26px;background:#9a9a9a;"></div>
<div style="position:absolute;left:266px;top:157px;width:47px;height:26px;background:linear-gradient(to bottom,#e0ffff 0px,#66ffff 6px,#66ffff 100%);"></div>
<div style="position:absolute;left:266px;width:47px;top:165px;text-align:center;font-size:11.5px;line-height:12px;color:#101010;">Ф</div>
<div style="position:absolute;left:313px;top:157px;width:1px;height:26px;background:#9a9a9a;"></div>
<div style="position:absolute;left:314px;top:157px;width:46px;height:26px;background:linear-gradient(to bottom,#d8d7dc 0%,#d0cfd4 100%);"></div>
<svg style="position:absolute;left:332.7px;top:166.8px" width="7" height="7"><path d="M0.8 0.8 L6.2 6.2 M6.2 0.8 L0.8 6.2" stroke="#111" stroke-width="1.05"/></svg>
<div style="position:absolute;left:360px;top:157px;width:1px;height:26px;background:#9a9a9a;"></div>
<div style="position:absolute;left:361px;top:157px;width:46px;height:26px;background:linear-gradient(to bottom,#d8d7dc 0%,#d0cfd4 100%);"></div>
<svg style="position:absolute;left:379.7px;top:166.8px" width="7" height="7"><path d="M0.8 0.8 L6.2 6.2 M6.2 0.8 L0.8 6.2" stroke="#111" stroke-width="1.05"/></svg>
<div style="position:absolute;left:408px;top:157px;width:46px;height:26px;background:linear-gradient(to bottom,#ff8080 0px,#ff0000 6px,#ff0000 100%);"></div>
<div style="position:absolute;left:408px;width:46px;top:165px;text-align:center;font-size:11.5px;line-height:12px;color:#101010;">Р</div>
<div style="position:absolute;left:454px;top:157px;width:1px;height:26px;background:#9a9a9a;"></div>
<div style="position:absolute;left:455px;top:157px;width:46px;height:26px;background:linear-gradient(to bottom,#fff0d8 0px,#fcc870 6px,#fcc870 100%);"></div>
<div style="position:absolute;left:455px;width:46px;top:165px;text-align:center;font-size:11.5px;line-height:12px;color:#101010;">Г</div>
<div style="position:absolute;left:501px;top:157px;width:1px;height:26px;background:#9a9a9a;"></div>
<div style="position:absolute;left:502px;top:157px;width:47px;height:26px;background:linear-gradient(to bottom,#80ff80 0px,#00ee00 6px,#00ee00 100%);"></div>
<div style="position:absolute;left:502px;width:47px;top:165px;text-align:center;font-size:11.5px;line-height:12px;color:#101010;">М</div>
<div style="position:absolute;left:549px;top:157px;width:1px;height:26px;background:#9a9a9a;"></div>
<div style="position:absolute;left:550px;top:157px;width:46px;height:26px;background:linear-gradient(to bottom,#d8d7dc 0%,#d0cfd4 100%);"></div>
<div style="position:absolute;left:596px;top:157px;width:1px;height:26px;background:#9a9a9a;"></div>
<div style="position:absolute;left:597px;top:157px;width:46px;height:26px;background:linear-gradient(to bottom,#d8d7dc 0%,#d0cfd4 100%);"></div>
<div style="position:absolute;left:643px;top:157px;width:1px;height:26px;background:#9a9a9a;"></div>
<div style="position:absolute;left:644px;top:157px;width:46px;height:26px;background:linear-gradient(to bottom,#d8d7dc 0%,#d0cfd4 100%);"></div>
<div style="position:absolute;left:690px;top:157px;width:1px;height:26px;background:#9a9a9a;"></div>
<div style="position:absolute;left:691px;top:157px;width:48px;height:26px;background:linear-gradient(to bottom,#d8d7dc 0%,#d0cfd4 100%);"></div>
<svg style="position:absolute;left:710.7px;top:166.8px" width="7" height="7"><path d="M0.8 0.8 L6.2 6.2 M6.2 0.8 L0.8 6.2" stroke="#111" stroke-width="1.05"/></svg>
<div style="position:absolute;left:739px;top:157px;width:1px;height:26px;background:#9a9a9a;"></div>
<div style="position:absolute;left:740px;top:157px;width:46px;height:26px;background:linear-gradient(to bottom,#d8d7dc 0%,#d0cfd4 100%);"></div>
<svg style="position:absolute;left:758.7px;top:166.8px" width="7" height="7"><path d="M0.8 0.8 L6.2 6.2 M6.2 0.8 L0.8 6.2" stroke="#111" stroke-width="1.05"/></svg>
<div style="position:absolute;left:787px;top:157px;width:46px;height:26px;background:linear-gradient(to bottom,#8080ff 0px,#0000ff 6px,#0000ff 100%);"></div>
<div style="position:absolute;left:787px;width:46px;top:165px;text-align:center;font-size:11.5px;line-height:12px;color:#101010;">Ф</div>
<div style="position:absolute;left:833px;top:157px;width:1px;height:26px;background:#9a9a9a;"></div>
<div style="position:absolute;left:834px;top:157px;width:46px;height:26px;background:linear-gradient(to bottom,#e0ffff 0px,#66ffff 6px,#66ffff 100%);"></div>
<div style="position:absolute;left:834px;width:46px;top:165px;text-align:center;font-size:11.5px;line-height:12px;color:#101010;">Ф</div>
<div style="position:absolute;left:880px;top:157px;width:1px;height:26px;background:#9a9a9a;"></div>
<div style="position:absolute;left:881px;top:157px;width:46px;height:26px;background:linear-gradient(to bottom,#ffffc0 0px,#fcf860 6px,#fcf860 100%);"></div>
<div style="position:absolute;left:881px;width:46px;top:165px;text-align:center;font-size:11.5px;line-height:12px;color:#101010;">Х</div>
<div style="position:absolute;left:927px;top:157px;width:1px;height:26px;background:#9a9a9a;"></div>
<div style="position:absolute;left:928px;top:157px;width:46px;height:26px;background:linear-gradient(to bottom,#80ff80 0px,#00ee00 6px,#00ee00 100%);"></div>
<div style="position:absolute;left:928px;width:46px;top:165px;text-align:center;font-size:11.5px;line-height:12px;color:#101010;">М</div>
<div style="position:absolute;left:974px;top:157px;width:1px;height:26px;background:#9a9a9a;"></div>
<div style="position:absolute;left:975px;top:157px;width:2px;height:26px;background:linear-gradient(to bottom,#ff8080 0px,#ff0000 6px,#ff0000 100%);"></div>
<div style="position:absolute;left:31px;top:184px;width:46px;height:26px;background:linear-gradient(to bottom,#8080ff 0px,#0000ff 6px,#0000ff 100%);"></div>
<div style="position:absolute;left:31px;width:46px;top:192px;text-align:center;font-size:11.5px;line-height:12px;color:#101010;">Ф</div>
<div style="position:absolute;left:78px;top:184px;width:899px;height:26px;background:linear-gradient(to bottom,#fff0d8 0px,#fcc870 6px,#fcc870 100%);"></div>
<div style="position:absolute;left:77px;top:184px;width:1px;height:26px;background:#9a9a9a;"></div>
<div style="position:absolute;left:78px;top:211px;width:899px;height:26px;background:linear-gradient(to bottom,#e06060 0px,#c80000 6px,#c80000 100%);"></div>
<div style="position:absolute;left:77px;top:211px;width:1px;height:26px;background:#9a9a9a;"></div>
<div style="position:absolute;left:31px;top:238px;width:946px;height:26px;background:linear-gradient(to bottom,#e0ffff 0px,#66ffff 6px,#66ffff 100%);"></div>
<div style="position:absolute;left:31px;width:93px;top:246px;text-align:center;font-size:11.5px;line-height:12px;color:#101010;">Ф</div>
<div style="position:absolute;left:31px;top:265px;width:46px;height:26px;background:linear-gradient(to bottom,#ffb0b0 0px,#ff6464 6px,#ff6464 100%);"></div>
<div style="position:absolute;left:31px;width:46px;top:273px;text-align:center;font-size:11.5px;line-height:12px;color:#101010;">Б</div>
<div style="position:absolute;left:78px;top:265px;width:899px;height:26px;background:linear-gradient(to bottom,#d8d7dc 0%,#d0cfd4 100%);"></div>
<div style="position:absolute;left:77px;top:265px;width:1px;height:26px;background:#9a9a9a;"></div>
<div style="position:absolute;left:31px;top:292px;width:46px;height:26px;background:linear-gradient(to bottom,#fff0ff 0px,#ffd0f8 6px,#ffd0f8 100%);"></div>
<div style="position:absolute;left:31px;width:46px;top:300px;text-align:center;font-size:11.5px;line-height:12px;color:#101010;">И</div>
<div style="position:absolute;left:78px;top:292px;width:899px;height:26px;background:linear-gradient(to bottom,#80ff80 0px,#00ee00 6px,#00ee00 100%);"></div>
<div style="position:absolute;left:77px;top:292px;width:1px;height:26px;background:#9a9a9a;"></div>
<div style="position:absolute;left:31px;top:319px;width:46px;height:26px;background:linear-gradient(to bottom,#d8d7dc 0%,#d0cfd4 100%);"></div>
<div style="position:absolute;left:78px;top:319px;width:899px;height:26px;background:linear-gradient(to bottom,#d8d7dc 0%,#d0cfd4 100%);"></div>
<div style="position:absolute;left:77px;top:319px;width:1px;height:26px;background:#9a9a9a;"></div>
<div style="position:absolute;left:31px;top:346px;width:46px;height:26px;background:linear-gradient(to bottom,#ffffc0 0px,#fcf860 6px,#fcf860 100%);"></div>
<div style="position:absolute;left:31px;width:46px;top:354px;text-align:center;font-size:11.5px;line-height:12px;color:#101010;">Х</div>
<div style="position:absolute;left:78px;top:346px;width:899px;height:26px;background:linear-gradient(to bottom,#ff8080 0px,#ff0000 6px,#ff0000 100%);"></div>
<div style="position:absolute;left:77px;top:346px;width:1px;height:26px;background:#9a9a9a;"></div>
<div style="position:absolute;left:31px;top:373px;width:46px;height:26px;background:linear-gradient(to bottom,#d8d7dc 0%,#d0cfd4 100%);"></div>
<div style="position:absolute;left:78px;top:373px;width:899px;height:26px;background:linear-gradient(to bottom,#d8d7dc 0%,#d0cfd4 100%);"></div>
<div style="position:absolute;left:77px;top:373px;width:1px;height:26px;background:#9a9a9a;"></div>
<div style="position:absolute;left:31px;top:400px;width:46px;height:26px;background:linear-gradient(to bottom,#ff8080 0px,#ff0000 6px,#ff0000 100%);"></div>
<div style="position:absolute;left:31px;width:46px;top:408px;text-align:center;font-size:11.5px;line-height:12px;color:#101010;">Л</div>
<div style="position:absolute;left:78px;top:400px;width:899px;height:26px;background:linear-gradient(to bottom,#fff0ff 0px,#ffd0f8 6px,#ffd0f8 100%);"></div>
<div style="position:absolute;left:77px;top:400px;width:1px;height:26px;background:#9a9a9a;"></div>
<div style="position:absolute;left:31px;top:211px;width:46px;height:26px;background:#d1d0d5;"></div>
<div style="position:absolute;left:31px;top:211px;width:46px;height:13px;background:#00f000;"></div>
<div style="position:absolute;left:31px;top:211px;width:2px;height:13px;background:#000;"></div>
<div style="position:absolute;left:31px;top:224px;width:46px;height:1px;background:repeating-linear-gradient(to right,#fff 0 3px,transparent 3px 5px);"></div>
<div style="position:absolute;left:31px;width:46px;top:213px;text-align:center;font-size:10.5px;line-height:10px;color:#101010;transform:scaleX(0.72);">М</div>
<div style="position:absolute;left:94px;top:179px;width:882px;height:546px;box-shadow:0 4px 18px rgba(0,0,0,0.28);"></div>
<div style="position:absolute;left:94px;top:179px;width:882px;height:546px;background:#f0f0f0;border:1px solid #1883d7;"></div>
<div style="position:absolute;left:95px;top:180px;width:880px;height:30px;background:#fff;"></div>
<svg style="position:absolute;left:103px;top:188px" width="16" height="13" viewBox="0 0 16 13"><defs><linearGradient id="tig" x1="0" y1="0" x2="1" y2="1"><stop offset="0" stop-color="#2a64a8"/><stop offset="1" stop-color="#4ab060"/></linearGradient></defs><rect x="0.5" y="0.5" width="14.5" height="11.5" fill="#fff" stroke="#c8d0d8"/><path d="M0.6 0.5 V12 H15" stroke="#707880" stroke-width="1.2" fill="none"/><rect x="2" y="2" width="6" height="8" fill="url(#tig)"/><path d="M9.3 3.4H12M9.3 5.5H12M9.3 7.5H12M9.3 9.4H12" stroke="#b8b8b8" stroke-width="0.9"/><rect x="13" y="2" width="1.3" height="5" fill="#58a868"/></svg>
<div style="position:absolute;left:124px;top:189px;font-size:12px;line-height:12px;height:12px;color:#000;font-weight:400;white-space:nowrap;">Нагрузка</div>
<div style="position:absolute;left:857px;top:194px;width:11px;height:1px;background:#c0c0c0;"></div>
<div style="position:absolute;left:902px;top:189px;width:10px;height:10px;border:1px solid #000;"></div>
<svg style="position:absolute;left:947px;top:188px" width="12" height="12" viewBox="0 0 12 12"><path d="M1 1 L11 11 M11 1 L1 11" stroke="#000" stroke-width="1.1"/></svg>
<svg style="position:absolute;left:106px;top:214px" width="42" height="42" viewBox="0 0 48 48">
<path d="M0.8 36.3 Q1.5 26 11.5 25.8 Q21.5 26 22.5 36.3 Z" fill="#f5a8a8" stroke="#c01818" stroke-width="1.1"/>
<path d="M4.2 24 Q6.5 21.5 6 14 Q5.5 1 15.3 0.6 Q21.5 0.6 24.5 4.8 L24 21 Q19 25 10 24.5 Z" fill="#a87048" stroke="#8a5836" stroke-width="0.8"/>
<ellipse cx="15.5" cy="24.5" rx="3.5" ry="3" fill="#f0c888" stroke="#b89058" stroke-width="0.7"/>
<ellipse cx="15.8" cy="17" rx="5.3" ry="7.3" fill="#f0c888" stroke="#b89058" stroke-width="0.8"/>
<path d="M10.2 47.6 Q11 34.2 29 34 Q47 34.2 47.7 47.6 Z" fill="#b8e0b8" stroke="#1a8a1a" stroke-width="1.1"/>
<path d="M23.8 29 V36 Q29 39.5 34.2 36 V29 Z" fill="#fcd898" stroke="#b89858" stroke-width="0.8"/>
<path d="M18.6 22 Q16.5 7 23 4.5 Q29.5 1.5 36.5 4.8 Q41.5 8.5 39.8 22 Z" fill="#f0cc80" stroke="#b08e50" stroke-width="0.8"/>
<ellipse cx="19.3" cy="21.6" rx="1.3" ry="2" fill="#fde0a0" stroke="#b89858" stroke-width="0.6"/>
<ellipse cx="38.8" cy="21.6" rx="1.3" ry="2" fill="#fde0a0" stroke="#b89858" stroke-width="0.6"/>
<ellipse cx="29" cy="23.8" rx="8.6" ry="10.3" fill="#fde0a0" stroke="#b89858" stroke-width="0.8"/>
<path d="M20 21 Q18.5 9 25.5 6.5 Q33 4 37.5 8.5 Q40 13 38.8 19.5 Q37.5 14 34.5 12.5 Q29 17 20 21 Z" fill="#f0cc80" stroke="#b08e50" stroke-width="0.7"/>
</svg>
<div style="position:absolute;left:157px;top:219px;font-size:15.2px;line-height:15.2px;height:15.2px;color:#000;font-weight:700;white-space:nowrap;letter-spacing:-0.6px;">6 А</div>
<div style="position:absolute;left:157px;top:245px;font-size:11px;line-height:11px;height:11px;color:#000;font-weight:400;white-space:nowrap;letter-spacing:-0.6px;">6 А</div>
<div style="position:absolute;left:101px;top:259px;width:870px;height:411px;background:#fff;border:1px solid #828790;"></div>
<div style="position:absolute;left:102px;top:260px;width:741px;height:24px;background:#f0f0f0;border-bottom:1px solid #a8a8a8;"></div>
<div style="position:absolute;left:108px;top:268px;font-size:11px;line-height:11px;height:11px;color:#101010;font-weight:400;white-space:nowrap;">Предмет</div>
<div style="position:absolute;left:252px;top:261px;width:1px;height:23px;background:#c8c8c8;"></div>
<div style="position:absolute;left:259px;top:268px;font-size:11px;line-height:11px;height:11px;color:#101010;font-weight:400;white-space:nowrap;">Учитель</div>
<div style="position:absolute;left:412px;top:261px;width:1px;height:23px;background:#c8c8c8;"></div>
<div style="position:absolute;left:418px;top:268px;font-size:11px;line-height:11px;height:11px;color:#101010;font-weight:400;white-space:nowrap;">Класс</div>
<div style="position:absolute;left:542px;top:261px;width:1px;height:23px;background:#c8c8c8;"></div>
<div style="position:absolute;left:548px;top:268px;font-size:11px;line-height:11px;height:11px;color:#101010;font-weight:400;white-space:nowrap;">Всего</div>
<div style="position:absolute;left:592px;top:261px;width:1px;height:23px;background:#c8c8c8;"></div>
<div style="position:absolute;left:598px;top:268px;font-size:11px;line-height:11px;height:11px;color:#101010;font-weight:400;white-space:nowrap;">Длина</div>
<div style="position:absolute;left:652px;top:261px;width:1px;height:23px;background:#c8c8c8;"></div>
<div style="position:absolute;left:659px;top:268px;font-size:11px;line-height:11px;height:11px;color:#101010;font-weight:400;white-space:nowrap;">Кабинеты</div>
<div style="position:absolute;left:742px;top:261px;width:1px;height:23px;background:#c8c8c8;"></div>
<div style="position:absolute;left:748px;top:268px;font-size:11px;line-height:11px;height:11px;color:#101010;font-weight:400;white-space:nowrap;">Неделя</div>
<div style="position:absolute;left:792px;top:261px;width:1px;height:23px;background:#c8c8c8;"></div>
<div style="position:absolute;left:798px;top:268px;font-size:11px;line-height:11px;height:11px;color:#101010;font-weight:400;white-space:nowrap;">Семе...</div>
<div style="position:absolute;left:842px;top:261px;width:1px;height:23px;background:#c8c8c8;"></div>
<svg style="position:absolute;left:237px;top:265px" width="9" height="15"><path d="M1 14 L5 1 L8 14" stroke="#c8c8c8" fill="none" stroke-width="1"/></svg>
<div style="position:absolute;left:106px;top:285px;width:737px;height:26px;background:#f3f3f3;"></div>
<div style="position:absolute;left:109px;top:287px;width:22px;height:22px;background:linear-gradient(to bottom,#e05050 0px,#c00000 7px,#c00000 100%);border-right:2px solid #fff;box-shadow:inset -3px 0 0 #c00000;"></div><div style="position:absolute;left:109px;top:292px;width:22px;text-align:center;font-size:10.5px;line-height:12px;color:#101010;">АЯ</div>
<div style="position:absolute;left:158.5px;top:293px;font-size:11px;line-height:11px;height:11px;color:#101010;font-weight:400;white-space:nowrap;transform:scaleX(0.925);transform-origin:0 0;">АНГЛИЙСКИЙ...</div>
<div style="position:absolute;left:258.5px;top:293px;font-size:11px;line-height:11px;height:11px;color:#101010;font-weight:400;white-space:nowrap;transform:scaleX(0.925);transform-origin:0 0;">УЧИТЕЛЬ АНГЛИЙСКОГО</div>
<div style="position:absolute;left:418.5px;top:293px;font-size:11px;line-height:11px;height:11px;color:#101010;font-weight:400;white-space:nowrap;">6 А</div>
<div style="position:absolute;left:548.5px;top:293px;font-size:11px;line-height:11px;height:11px;color:#101010;font-weight:400;white-space:nowrap;">2</div>
<div style="position:absolute;left:599px;top:293px;font-size:11px;line-height:11px;height:11px;color:#101010;font-weight:400;white-space:nowrap;">1</div>
<svg style="position:absolute;left:660px;top:290px" width="12" height="12" viewBox="0 0 12 12"><rect x="0" y="0" width="12" height="12" fill="#fff"/><circle cx="6" cy="6" r="5" fill="#ff0000" stroke="#900000" stroke-width="0.9"/><path d="M3.2 8.8 L8.8 3.2" stroke="#fff" stroke-width="1.5"/></svg>
<div style="position:absolute;left:109px;top:313px;width:22px;height:22px;background:linear-gradient(to bottom,#ffa0a0 0px,#ff6060 7px,#ff6060 100%);"></div><div style="position:absolute;left:109px;top:318px;width:22px;text-align:center;font-size:10.5px;line-height:12px;color:#101010;">Б</div>
<div style="position:absolute;left:158.5px;top:319px;font-size:11px;line-height:11px;height:11px;color:#101010;font-weight:400;white-space:nowrap;transform:scaleX(0.925);transform-origin:0 0;">БИОЛОГИЯ</div>
<div style="position:absolute;left:258.5px;top:319px;font-size:11px;line-height:11px;height:11px;color:#101010;font-weight:400;white-space:nowrap;transform:scaleX(0.925);transform-origin:0 0;">УЧИТЕЛЬ БИОЛОГИИ</div>
<div style="position:absolute;left:418.5px;top:319px;font-size:11px;line-height:11px;height:11px;color:#101010;font-weight:400;white-space:nowrap;">6 А</div>
<div style="position:absolute;left:548.5px;top:319px;font-size:11px;line-height:11px;height:11px;color:#101010;font-weight:400;white-space:nowrap;">6</div>
<div style="position:absolute;left:599px;top:319px;font-size:11px;line-height:11px;height:11px;color:#101010;font-weight:400;white-space:nowrap;">1</div>
<svg style="position:absolute;left:661px;top:316px" width="11" height="11" viewBox="0 0 11 11"><path d="M2.5 5 V10 Q5.5 11.2 8.5 10 V5Z" fill="#38383e"/><path d="M5.3 0.3 L10.6 4.6 L5.3 8 L0.2 4.6Z" fill="#505058" stroke="#202028" stroke-width="0.6"/><path d="M5.5 4.4 H3.5" stroke="#f0a020" stroke-width="1"/><path d="M0.9 5.3 V9.5" stroke="#f5b030" stroke-width="0.9"/></svg>
<svg style="position:absolute;left:681px;top:316px" width="9" height="11" viewBox="0 0 9 11"><rect x="0" y="0" width="9" height="11" fill="#8ab6f0"/><rect x="0" y="0" width="1.6" height="11" fill="#4c7cbc"/><path d="M0 10.6 H9 M8.6 0 V11" stroke="#6a98d8" stroke-width="0.8"/><rect x="2.6" y="2" width="4.6" height="3" fill="#fff"/><path d="M3.4 3.8 H6.6" stroke="#c4d0dc" stroke-width="0.6"/></svg>
<div style="position:absolute;left:106px;top:337px;width:737px;height:26px;background:#f3f3f3;"></div>
<div style="position:absolute;left:109px;top:339px;width:22px;height:22px;background:linear-gradient(to bottom,#fff0d8 0px,#fcc870 7px,#fcc870 100%);"></div><div style="position:absolute;left:109px;top:344px;width:22px;text-align:center;font-size:10.5px;line-height:12px;color:#101010;">Г</div>
<div style="position:absolute;left:158.5px;top:345px;font-size:11px;line-height:11px;height:11px;color:#101010;font-weight:400;white-space:nowrap;transform:scaleX(0.925);transform-origin:0 0;">ГЕОГРАФИЯ</div>
<div style="position:absolute;left:258.5px;top:345px;font-size:11px;line-height:11px;height:11px;color:#101010;font-weight:400;white-space:nowrap;transform:scaleX(0.925);transform-origin:0 0;">УЧИТЕЛЬ ГЕОГРАФИЯ</div>
<div style="position:absolute;left:418.5px;top:345px;font-size:11px;line-height:11px;height:11px;color:#101010;font-weight:400;white-space:nowrap;">6 А</div>
<div style="position:absolute;left:548.5px;top:345px;font-size:11px;line-height:11px;height:11px;color:#101010;font-weight:400;white-space:nowrap;">6</div>
<div style="position:absolute;left:599px;top:345px;font-size:11px;line-height:11px;height:11px;color:#101010;font-weight:400;white-space:nowrap;">1</div>
<svg style="position:absolute;left:661px;top:342px" width="11" height="11" viewBox="0 0 11 11"><path d="M2.5 5 V10 Q5.5 11.2 8.5 10 V5Z" fill="#38383e"/><path d="M5.3 0.3 L10.6 4.6 L5.3 8 L0.2 4.6Z" fill="#505058" stroke="#202028" stroke-width="0.6"/><path d="M5.5 4.4 H3.5" stroke="#f0a020" stroke-width="1"/><path d="M0.9 5.3 V9.5" stroke="#f5b030" stroke-width="0.9"/></svg>
<svg style="position:absolute;left:681px;top:342px" width="9" height="11" viewBox="0 0 9 11"><rect x="0" y="0" width="9" height="11" fill="#8ab6f0"/><rect x="0" y="0" width="1.6" height="11" fill="#4c7cbc"/><path d="M0 10.6 H9 M8.6 0 V11" stroke="#6a98d8" stroke-width="0.8"/><rect x="2.6" y="2" width="4.6" height="3" fill="#fff"/><path d="M3.4 3.8 H6.6" stroke="#c4d0dc" stroke-width="0.6"/></svg>
<div style="position:absolute;left:109px;top:365px;width:22px;height:22px;background:linear-gradient(to bottom,#ff8080 0px,#ff0000 7px,#ff0000 100%);"></div><div style="position:absolute;left:109px;top:370px;width:22px;text-align:center;font-size:10.5px;line-height:12px;color:#101010;">Л</div>
<div style="position:absolute;left:158.5px;top:371px;font-size:11px;line-height:11px;height:11px;color:#101010;font-weight:400;white-space:nowrap;transform:scaleX(0.925);transform-origin:0 0;">ЛИТЕРАТУРА</div>
<div style="position:absolute;left:258.5px;top:371px;font-size:11px;line-height:11px;height:11px;color:#101010;font-weight:400;white-space:nowrap;transform:scaleX(0.925);transform-origin:0 0;">УЧИТЕЛЬ</div>
<div style="position:absolute;left:418.5px;top:371px;font-size:11px;line-height:11px;height:11px;color:#101010;font-weight:400;white-space:nowrap;">6 А</div>
<div style="position:absolute;left:548.5px;top:371px;font-size:11px;line-height:11px;height:11px;color:#101010;font-weight:400;white-space:nowrap;">3</div>
<div style="position:absolute;left:599px;top:371px;font-size:11px;line-height:11px;height:11px;color:#101010;font-weight:400;white-space:nowrap;">1</div>
<svg style="position:absolute;left:661px;top:368px" width="11" height="11" viewBox="0 0 11 11"><path d="M2.5 5 V10 Q5.5 11.2 8.5 10 V5Z" fill="#38383e"/><path d="M5.3 0.3 L10.6 4.6 L5.3 8 L0.2 4.6Z" fill="#505058" stroke="#202028" stroke-width="0.6"/><path d="M5.5 4.4 H3.5" stroke="#f0a020" stroke-width="1"/><path d="M0.9 5.3 V9.5" stroke="#f5b030" stroke-width="0.9"/></svg>
<svg style="position:absolute;left:681px;top:368px" width="9" height="11" viewBox="0 0 9 11"><rect x="0" y="0" width="9" height="11" fill="#8ab6f0"/><rect x="0" y="0" width="1.6" height="11" fill="#4c7cbc"/><path d="M0 10.6 H9 M8.6 0 V11" stroke="#6a98d8" stroke-width="0.8"/><rect x="2.6" y="2" width="4.6" height="3" fill="#fff"/><path d="M3.4 3.8 H6.6" stroke="#c4d0dc" stroke-width="0.6"/></svg>
<div style="position:absolute;left:106px;top:389px;width:737px;height:26px;background:#0078d7;border:1px dotted #e8a040;"></div>
<div style="position:absolute;left:109px;top:391px;width:22px;height:22px;background:linear-gradient(to bottom,#80ff80 0px,#00f000 7px,#00f000 100%);border-left:2px solid #000;"></div><div style="position:absolute;left:109px;top:396px;width:22px;text-align:center;font-size:10.5px;line-height:12px;color:#101010;">М</div>
<div style="position:absolute;left:158.5px;top:397px;font-size:11px;line-height:11px;height:11px;color:#fff;font-weight:400;white-space:nowrap;transform:scaleX(0.925);transform-origin:0 0;">МАТЕМАТИКА</div>
<div style="position:absolute;left:258.5px;top:397px;font-size:11px;line-height:11px;height:11px;color:#fff;font-weight:400;white-space:nowrap;transform:scaleX(0.925);transform-origin:0 0;">УЧИТЕЛЬ МАТЕМАТИКИ</div>
<div style="position:absolute;left:418.5px;top:397px;font-size:11px;line-height:11px;height:11px;color:#fff;font-weight:400;white-space:nowrap;">6 А</div>
<div style="position:absolute;left:548.5px;top:397px;font-size:11px;line-height:11px;height:11px;color:#fff;font-weight:400;white-space:nowrap;">4</div>
<div style="position:absolute;left:599px;top:397px;font-size:11px;line-height:11px;height:11px;color:#fff;font-weight:400;white-space:nowrap;">1</div>
<svg style="position:absolute;left:661px;top:394px" width="11" height="11" viewBox="0 0 11 11"><path d="M2.5 5 V10 Q5.5 11.2 8.5 10 V5Z" fill="#38383e"/><path d="M5.3 0.3 L10.6 4.6 L5.3 8 L0.2 4.6Z" fill="#505058" stroke="#202028" stroke-width="0.6"/><path d="M5.5 4.4 H3.5" stroke="#f0a020" stroke-width="1"/><path d="M0.9 5.3 V9.5" stroke="#f5b030" stroke-width="0.9"/></svg>
<svg style="position:absolute;left:681px;top:394px" width="9" height="11" viewBox="0 0 9 11"><rect x="0" y="0" width="9" height="11" fill="#8ab6f0"/><rect x="0" y="0" width="1.6" height="11" fill="#4c7cbc"/><path d="M0 10.6 H9 M8.6 0 V11" stroke="#6a98d8" stroke-width="0.8"/><rect x="2.6" y="2" width="4.6" height="3" fill="#fff"/><path d="M3.4 3.8 H6.6" stroke="#c4d0dc" stroke-width="0.6"/></svg>
<div style="position:absolute;left:109px;top:417px;width:45px;height:22px;background:linear-gradient(to bottom,#ff8080 0px,#ff0000 7px,#ff0000 100%);"></div><div style="position:absolute;left:109px;top:422px;width:45px;text-align:center;font-size:10.5px;line-height:12px;color:#101010;">Р</div>
<div style="position:absolute;left:158.5px;top:423px;font-size:11px;line-height:11px;height:11px;color:#101010;font-weight:400;white-space:nowrap;transform:scaleX(0.925);transform-origin:0 0;">РУССКИЙ</div>
<div style="position:absolute;left:106px;top:441px;width:737px;height:26px;background:#f3f3f3;"></div>
<div style="position:absolute;left:109px;top:443px;width:22px;height:22px;background:linear-gradient(to bottom,#8080ff 0px,#0000ff 7px,#0000ff 100%);"></div><div style="position:absolute;left:109px;top:448px;width:22px;text-align:center;font-size:10.5px;line-height:12px;color:#101010;">Ф</div>
<div style="position:absolute;left:158.5px;top:449px;font-size:11px;line-height:11px;height:11px;color:#101010;font-weight:400;white-space:nowrap;transform:scaleX(0.925);transform-origin:0 0;">ФИЗИКА</div>
<div style="position:absolute;left:109px;top:469px;width:22px;height:22px;background:linear-gradient(to bottom,#e0ffff 0px,#66ffff 7px,#66ffff 100%);"></div><div style="position:absolute;left:109px;top:474px;width:22px;text-align:center;font-size:10.5px;line-height:12px;color:#101010;">Ф</div>
<div style="position:absolute;left:158.5px;top:475px;font-size:11px;line-height:11px;height:11px;color:#101010;font-weight:400;white-space:nowrap;transform:scaleX(0.925);transform-origin:0 0;">ФИЗКУЛЬТУРА</div>
<div style="position:absolute;left:747px;top:391px;width:29px;height:15px;background:#fff;border:1px solid #000;"></div>
<div style="position:absolute;left:748px;top:392px;width:14px;height:13px;background:#000;border:1px solid #fff;"></div>
<div style="position:absolute;left:761px;top:392px;width:1px;height:13px;background:#000;"></div>
<div style="position:absolute;left:102px;top:686px;width:90px;height:26px;background:#e1e1e1;border:2px solid #0078d7;"></div>
<div style="position:absolute;left:116px;top:694px;font-size:11.5px;line-height:11.5px;height:11.5px;color:#000;font-weight:400;white-space:nowrap;">Новый урок</div>
<div style="position:absolute;left:870px;top:686px;width:100px;height:26px;background:#e1e1e1;border:1px solid #adadad;"></div>
<div style="position:absolute;left:870px;width:100px;top:692px;text-align:center;font-size:11.5px;line-height:13px;">Закрыть</div>
<svg style="position:absolute;left:964px;top:713px" width="10" height="10"><g fill="#b8b8b8"><rect x="7" y="1" width="2" height="2"/><rect x="4" y="4" width="2" height="2"/><rect x="7" y="4" width="2" height="2"/><rect x="1" y="7" width="2" height="2"/><rect x="4" y="7" width="2" height="2"/><rect x="7" y="7" width="2" height="2"/></g></svg>
<div style="position:absolute;left:808px;top:415px;width:35px;height:80px;background:#fff;"></div>
<div style="position:absolute;left:808px;top:433px;width:15px;height:26px;background:#f0f0f0;"></div>
<div style="position:absolute;left:839px;top:441px;width:4px;height:26px;background:#f4f4f4;"></div>
<div style="position:absolute;left:808px;top:716px;width:31px;height:14px;background:#d1d0d5;"></div>
<div style="position:absolute;left:808px;top:716px;width:31px;height:2px;background:#8c8c8c;"></div>
<div style="position:absolute;left:808px;top:718px;width:31px;height:12px;background:linear-gradient(to bottom,#f0f0f0,#e4e4e4);"></div>
<div style="position:absolute;left:839px;top:726px;width:138px;height:12px;background:linear-gradient(to bottom,#f2f2f2,#e2e2e2);"></div>
<div style="position:absolute;left:839px;top:725px;width:25px;height:1px;background:#909090;"></div>
<div style="position:absolute;left:183px;top:422px;width:625px;height:600px;box-shadow:6px 6px 16px -2px rgba(0,0,0,0.32);"></div>
<div style="position:absolute;left:183px;top:422px;width:625px;height:600px;background:#f0f0f0;border:1px solid #1883d7;border-top:1px solid #fff;"></div>
<div style="position:absolute;left:184px;top:423px;width:623px;height:25px;background:#fff;"></div>
<div style="position:absolute;left:187px;top:429px;font-size:12px;line-height:12px;height:12px;color:#000;font-weight:400;white-space:nowrap;">Урок</div>
<svg style="position:absolute;left:786px;top:429px" width="12" height="12" viewBox="0 0 12 12"><path d="M1 1 L11 11 M11 1 L1 11" stroke="#000" stroke-width="1.1"/></svg>
<div style="position:absolute;left:195px;top:469px;width:596px;height:73px;border:1px solid #dcdcdc;"></div>
<div style="position:absolute;left:195px;top:548px;width:596px;height:74px;border:1px solid #dcdcdc;"></div>
<div style="position:absolute;left:195px;top:628px;width:596px;height:91px;border:1px solid #dcdcdc;"></div>
<div style="position:absolute;left:195px;top:724px;width:596px;height:95px;border:1px solid #dcdcdc;"></div>
<div style="position:absolute;left:195px;top:826px;width:596px;height:175px;border:1px solid #dcdcdc;"></div>
<svg style="position:absolute;left:207px;top:477px" width="50" height="44" viewBox="0 0 50 44">
<path d="M11.5 20 V38 Q25 45 38.5 38 V20 Z" fill="#38383e"/>
<path d="M25.5 0.8 L48.4 16.3 L25.5 32 L1.9 16.3 Z" fill="#4e4e55" stroke="#16161e" stroke-width="1.4" stroke-linejoin="round"/>
<path d="M25.4 16.3 L6.3 19.8 V33" stroke="#f5a524" stroke-width="1.5" fill="none"/>
<path d="M6.3 31.5 L4 37.5 L6.3 41 L8.6 37.5 Z" fill="#f5a524" stroke="#e8951a" stroke-width="0.6"/>
</svg>
<div style="position:absolute;left:300px;top:483px;font-size:11.2px;line-height:11.2px;height:11.2px;color:#000;font-weight:400;white-space:nowrap;">Учитель</div>
<div style="position:absolute;left:300px;top:498px;width:234px;height:28px;background:#fff;border:1px solid #7a7a7a;"></div><div style="position:absolute;left:305px;top:504px;font-size:11.2px;line-height:11.2px;height:11.2px;color:#000;font-weight:400;white-space:nowrap;transform:scaleX(0.905);transform-origin:0 0;">УЧИТЕЛЬ МАТЕМАТИКИ (УЧИТЕЛЬ МАТЕМ</div><svg style="position:absolute;left:519px;top:512px" width="10" height="6"><path d="M1 1 L5 5 L9 1" stroke="#404040" stroke-width="1.1" fill="none"/></svg>
<div style="position:absolute;left:652px;top:497px;width:132px;height:24px;background:#f0f0f0;border:1px solid #a4a4a4;"></div><div style="position:absolute;left:656px;top:505px;font-size:11.2px;line-height:11.2px;height:11.2px;color:#000;font-weight:400;white-space:nowrap;">Больше учителей</div>
<svg style="position:absolute;left:212px;top:553px" width="40" height="46" viewBox="0 0 40 46">
<rect x="1" y="1.3" width="38" height="43" rx="1" fill="#8ab6f0" stroke="#5a86c8" stroke-width="1.2"/>
<rect x="1" y="1" width="6" height="43.6" rx="0.8" fill="#4c7cbc"/>
<rect x="13" y="11" width="18" height="12" fill="#fff"/>
<path d="M15.5 15 H28.5 M15.5 18.6 H28.5" stroke="#c4d0dc" stroke-width="1.4"/>
</svg>
<div style="position:absolute;left:300px;top:564px;font-size:11.2px;line-height:11.2px;height:11.2px;color:#000;font-weight:400;white-space:nowrap;">Предмет</div>
<div style="position:absolute;left:300px;top:578px;width:234px;height:21px;background:#fff;border:1px solid #7a7a7a;"></div><div style="position:absolute;left:305px;top:583px;font-size:11.2px;line-height:11.2px;height:11.2px;color:#000;font-weight:400;white-space:nowrap;transform:scaleX(0.905);transform-origin:0 0;">МАТЕМАТИКА</div><svg style="position:absolute;left:519px;top:586px" width="10" height="6"><path d="M1 1 L5 5 L9 1" stroke="#404040" stroke-width="1.1" fill="none"/></svg>
<svg style="position:absolute;left:208px;top:641px" width="48" height="48" viewBox="0 0 48 48">
<path d="M0.8 36.3 Q1.5 26 11.5 25.8 Q21.5 26 22.5 36.3 Z" fill="#f5a8a8" stroke="#c01818" stroke-width="1.1"/>
<path d="M4.2 24 Q6.5 21.5 6 14 Q5.5 1 15.3 0.6 Q21.5 0.6 24.5 4.8 L24 21 Q19 25 10 24.5 Z" fill="#a87048" stroke="#8a5836" stroke-width="0.8"/>
<ellipse cx="15.5" cy="24.5" rx="3.5" ry="3" fill="#f0c888" stroke="#b89058" stroke-width="0.7"/>
<ellipse cx="15.8" cy="17" rx="5.3" ry="7.3" fill="#f0c888" stroke="#b89058" stroke-width="0.8"/>
<path d="M10.2 47.6 Q11 34.2 29 34 Q47 34.2 47.7 47.6 Z" fill="#b8e0b8" stroke="#1a8a1a" stroke-width="1.1"/>
<path d="M23.8 29 V36 Q29 39.5 34.2 36 V29 Z" fill="#fcd898" stroke="#b89858" stroke-width="0.8"/>
<path d="M18.6 22 Q16.5 7 23 4.5 Q29.5 1.5 36.5 4.8 Q41.5 8.5 39.8 22 Z" fill="#f0cc80" stroke="#b08e50" stroke-width="0.8"/>
<ellipse cx="19.3" cy="21.6" rx="1.3" ry="2" fill="#fde0a0" stroke="#b89858" stroke-width="0.6"/>
<ellipse cx="38.8" cy="21.6" rx="1.3" ry="2" fill="#fde0a0" stroke="#b89858" stroke-width="0.6"/>
<ellipse cx="29" cy="23.8" rx="8.6" ry="10.3" fill="#fde0a0" stroke="#b89858" stroke-width="0.8"/>
<path d="M20 21 Q18.5 9 25.5 6.5 Q33 4 37.5 8.5 Q40 13 38.8 19.5 Q37.5 14 34.5 12.5 Q29 17 20 21 Z" fill="#f0cc80" stroke="#b08e50" stroke-width="0.7"/>
</svg>
<div style="position:absolute;left:300px;top:642px;font-size:11.2px;line-height:11.2px;height:11.2px;color:#000;font-weight:400;white-space:nowrap;">Класс</div>
<div style="position:absolute;left:300px;top:656px;width:152px;height:21px;background:#fff;border:1px solid #7a7a7a;"></div><div style="position:absolute;left:305px;top:661px;font-size:11.2px;line-height:11.2px;height:11.2px;color:#000;font-weight:400;white-space:nowrap;">6 А</div><svg style="position:absolute;left:437px;top:664px" width="10" height="6"><path d="M1 1 L5 5 L9 1" stroke="#404040" stroke-width="1.1" fill="none"/></svg>
<div style="position:absolute;left:493px;top:656px;width:102px;height:21px;background:#fff;border:1px solid #7a7a7a;"></div><div style="position:absolute;left:498px;top:661px;font-size:11.2px;line-height:11.2px;height:11.2px;color:#000;font-weight:400;white-space:nowrap;">Весь класс</div><svg style="position:absolute;left:580px;top:664px" width="10" height="6"><path d="M1 1 L5 5 L9 1" stroke="#404040" stroke-width="1.1" fill="none"/></svg>
<div style="position:absolute;left:652px;top:656px;width:132px;height:24px;background:#f0f0f0;border:1px solid #a4a4a4;"></div><div style="position:absolute;left:656px;top:664px;font-size:11.2px;line-height:11.2px;height:11.2px;color:#000;font-weight:400;white-space:nowrap;">Объединенные классы</div>
<div style="position:absolute;left:652px;top:685px;width:132px;height:24px;background:#f0f0f0;border:1px solid #a4a4a4;"></div><div style="position:absolute;left:656px;top:693px;font-size:11.2px;line-height:11.2px;height:11.2px;color:#000;font-weight:400;white-space:nowrap;">Новая группа</div>
<svg style="position:absolute;left:209px;top:740px" width="46" height="46" viewBox="0 0 46 46">
<rect x="1.6" y="1.3" width="42.7" height="43" rx="1.5" fill="#fff" stroke="#a8b8c8" stroke-width="1.3"/>
<rect x="2.2" y="39.6" width="41.5" height="4.2" fill="#dde8f0"/>
<rect x="1.6" y="1.3" width="42.7" height="7" rx="1" fill="#f89090" stroke="#d86868" stroke-width="1"/>
<g fill="#b4c4d2"><rect x="14.6" y="15.6" width="2.4" height="2.4"/><rect x="19.4" y="15.6" width="2.4" height="2.4"/><rect x="24.1" y="15.6" width="2.4" height="2.4"/><rect x="29.0" y="15.6" width="2.4" height="2.4"/><rect x="33.8" y="15.6" width="2.4" height="2.4"/><rect x="9.7" y="20.4" width="2.4" height="2.4"/><rect x="14.6" y="20.4" width="2.4" height="2.4"/><rect x="19.4" y="20.4" width="2.4" height="2.4"/><rect x="24.1" y="20.4" width="2.4" height="2.4"/><rect x="29.0" y="20.4" width="2.4" height="2.4"/><rect x="33.8" y="20.4" width="2.4" height="2.4"/><rect x="9.7" y="25.3" width="2.4" height="2.4"/><rect x="14.6" y="25.3" width="2.4" height="2.4"/><rect x="19.4" y="25.3" width="2.4" height="2.4"/><rect x="24.1" y="25.3" width="2.4" height="2.4"/><rect x="29.0" y="25.3" width="2.4" height="2.4"/><rect x="33.8" y="25.3" width="2.4" height="2.4"/><rect x="9.7" y="30.0" width="2.4" height="2.4"/><rect x="14.6" y="30.0" width="2.4" height="2.4"/><rect x="19.4" y="30.0" width="2.4" height="2.4"/><rect x="24.1" y="30.0" width="2.4" height="2.4"/><rect x="29.0" y="30.0" width="2.4" height="2.4"/></g></svg>
<div style="position:absolute;left:300px;top:743px;font-size:11.2px;line-height:11.2px;height:11.2px;color:#000;font-weight:400;white-space:nowrap;">Уроков</div>
<div style="position:absolute;left:300px;top:758px;width:152px;height:28px;background:#fff;border:1px solid #7a7a7a;"></div><div style="position:absolute;left:305px;top:762px;font-size:11.2px;line-height:11.2px;height:11.2px;color:#000;font-weight:400;white-space:nowrap;">4</div><svg style="position:absolute;left:437px;top:772px" width="10" height="6"><path d="M1 1 L5 5 L9 1" stroke="#404040" stroke-width="1.1" fill="none"/></svg>
<div style="position:absolute;left:493px;top:758px;width:102px;height:27px;background:#fff;border:1px solid #7a7a7a;"></div><div style="position:absolute;left:498px;top:762px;font-size:11.2px;line-height:11.2px;height:11.2px;color:#000;font-weight:400;white-space:nowrap;">Урок</div><svg style="position:absolute;left:580px;top:771px" width="10" height="6"><path d="M1 1 L5 5 L9 1" stroke="#404040" stroke-width="1.1" fill="none"/></svg>
<div style="position:absolute;left:652px;top:755px;width:132px;height:28px;background:#fff;border:1px solid #0078d7;"></div><div style="position:absolute;left:767px;top:756px;width:16px;height:26px;background:#d8eaf8;border-left:1px solid #0078d7;"></div><div style="position:absolute;left:657px;top:759px;font-size:11.2px;line-height:11.2px;height:11.2px;color:#000;font-weight:400;white-space:nowrap;">Неделя А</div><svg style="position:absolute;left:769px;top:769px" width="10" height="6"><path d="M1 1 L5 5 L9 1" stroke="#404040" stroke-width="1.1" fill="none"/></svg>
<div style="position:absolute;left:652px;top:782px;width:183px;height:84px;background:#fff;border:1px solid #0078d7;"></div>
<div style="position:absolute;left:653px;top:824px;width:181px;height:20px;background:#cce4f7;"></div>
<div style="position:absolute;left:655px;top:786px;font-size:11.2px;line-height:11.2px;height:11.2px;color:#000;font-weight:400;white-space:nowrap;">Любая неделя</div>
<div style="position:absolute;left:756.5px;top:786px;font-size:11.2px;line-height:11.2px;height:11.2px;color:#000;font-weight:400;white-space:nowrap;">Любой</div>
<div style="position:absolute;left:655px;top:806px;font-size:11.2px;line-height:11.2px;height:11.2px;color:#000;font-weight:400;white-space:nowrap;">Все недели</div>
<div style="position:absolute;left:756.5px;top:806px;font-size:11.2px;line-height:11.2px;height:11.2px;color:#000;font-weight:400;white-space:nowrap;">Все</div>
<div style="position:absolute;left:655px;top:826px;font-size:11.2px;line-height:11.2px;height:11.2px;color:#000;font-weight:400;white-space:nowrap;">Неделя А</div>
<div style="position:absolute;left:756.5px;top:826px;font-size:11.2px;line-height:11.2px;height:11.2px;color:#000;font-weight:400;white-space:nowrap;">А</div>
<div style="position:absolute;left:655px;top:846px;font-size:11.2px;line-height:11.2px;height:11.2px;color:#000;font-weight:400;white-space:nowrap;">Неделя В</div>
<div style="position:absolute;left:756.5px;top:846px;font-size:11.2px;line-height:11.2px;height:11.2px;color:#000;font-weight:400;white-space:nowrap;">В</div>
<svg style="position:absolute;left:214px;top:844px" width="36" height="50" viewBox="0 0 36 50">
<rect x="4" y="3" width="31" height="44" fill="#f8b890" stroke="#c08860" stroke-width="1"/>
<rect x="14" y="7" width="19" height="39" fill="#3a3038"/>
<rect x="22" y="8" width="11" height="38" fill="#6a5860"/>
<path d="M1 3 L16 0.5 V49.5 L1 46 Z" fill="#fac8a8" stroke="#c08860" stroke-width="1"/>
<circle cx="12" cy="24" r="0.9" fill="#804020"/>
</svg>
<div style="position:absolute;left:300px;top:843px;width:13px;height:13px;background:#f4f4f4;border:1px solid #333;"></div>
<div style="position:absolute;left:315.5px;top:845px;font-size:11.2px;line-height:11.2px;height:11.2px;color:#000;font-weight:400;white-space:nowrap;">Основной кабинет</div>
<div style="position:absolute;left:300px;top:862px;width:13px;height:13px;background:#f4f4f4;border:1px solid #333;"></div>
<div style="position:absolute;left:315.5px;top:864px;font-size:11.2px;line-height:11.2px;height:11.2px;color:#000;font-weight:400;white-space:nowrap;">Общий кабинет № 1, № 2</div>
<div style="position:absolute;left:535px;top:841px;width:13px;height:13px;background:#f4f4f4;border:1px solid #333;"></div><svg style="position:absolute;left:535px;top:841px" width="13" height="13"><path d="M2.5 6.5 L5 9.5 L10.5 3" stroke="#222" stroke-width="1.3" fill="none"/></svg>
<div style="position:absolute;left:550.5px;top:843px;font-size:11.2px;line-height:11.2px;height:11.2px;color:#000;font-weight:400;white-space:nowrap;">Кабинеты учителей</div>
<div style="position:absolute;left:535px;top:862px;width:13px;height:13px;background:#f4f4f4;border:1px solid #333;"></div><svg style="position:absolute;left:535px;top:862px" width="13" height="13"><path d="M2.5 6.5 L5 9.5 L10.5 3" stroke="#222" stroke-width="1.3" fill="none"/></svg>
<div style="position:absolute;left:550.5px;top:864px;font-size:11.2px;line-height:11.2px;height:11.2px;color:#000;font-weight:400;white-space:nowrap;">Кабинеты предметов</div>
<div style="position:absolute;left:300px;top:882px;width:342px;height:24px;background:#f0f0f0;border:1px solid #a4a4a4;"></div><div style="position:absolute;left:304px;top:890px;font-size:11.2px;line-height:11.2px;height:11.2px;color:#000;font-weight:400;white-space:nowrap;">Другие доступные кабинеты</div>
<div style="position:absolute;left:652px;top:882px;width:132px;height:24px;background:#f0f0f0;border:1px solid #a4a4a4;"></div><div style="position:absolute;left:656px;top:890px;font-size:11.2px;line-height:11.2px;height:11.2px;color:#000;font-weight:400;white-space:nowrap;">Больше кабинетов</div>
<svg style="position:absolute;left:0;top:0" width="977" height="922" viewBox="0 0 977 922">
<g fill="none" stroke="#ea2230" stroke-linejoin="round" stroke-linecap="round">
<path d="M23 208.6 L77 207.8 Q80.6 207.8 80.6 211.5 L80.6 240.5 Q80.6 244 77 244 L23.5 244 Q19.6 244 19.6 240 L19.6 212.5 Q19.6 208.6 23 208.6 Z" stroke-width="3.6" opacity="0.9"/>
<path d="M105.5 385.3 L848 385.2 Q851.5 385.2 851.5 388.5 L851.5 417 Q851.5 420.3 848 420.3 L105 419.8 Q102 419.8 102 416.5 L102 388.5 Q102 385.3 105.5 385.3 Z" stroke-width="3.6"/>
<path d="M647.5 746 L835.5 745.5 Q838.5 745.5 838.5 748.5 L838.5 863 Q838.5 866 835.5 866 L647.5 866 Q644.4 866 644.4 863 L644.4 749 Q644.4 746 647.5 746 Z" stroke-width="3.6"/>
</g>
<g fill="none" stroke="#ff0000" stroke-linecap="round" stroke-linejoin="round">
<path d="M144.5 378 L61 238.5" stroke-width="3.4"/>
<path d="M62 256 L61 238.5 L79 246" stroke-width="3.6"/>
</g></svg>
</body></html>
